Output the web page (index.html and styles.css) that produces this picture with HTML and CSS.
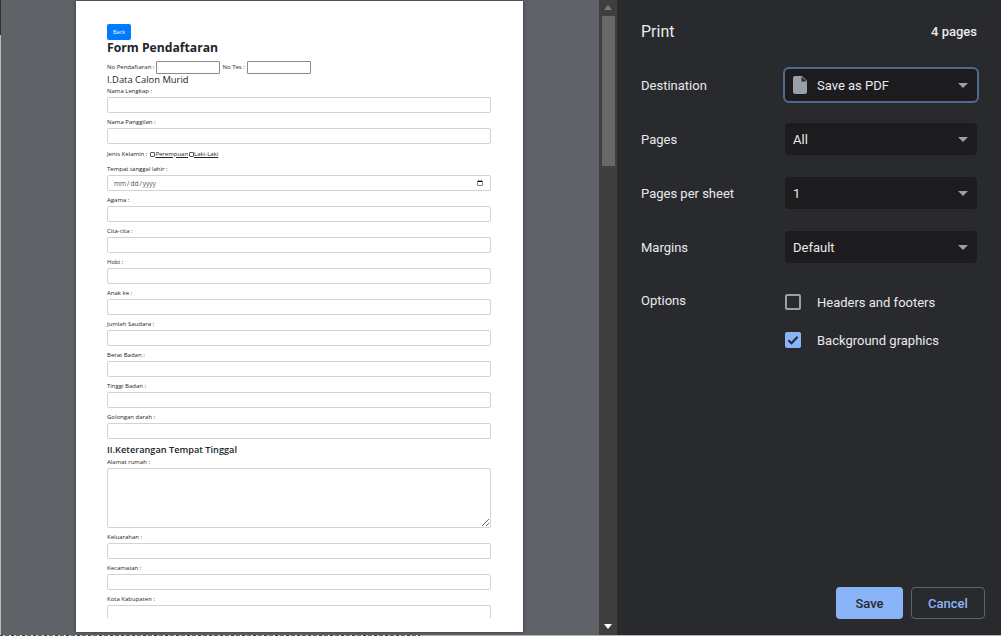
FILE: index.html
```html
<!DOCTYPE html>
<html lang="id">
<head>
    <meta charset="UTF-8">
    <meta name="viewport" content="width=device-width, initial-scale=1.0">
    <title>Print</title>
    <link rel="stylesheet" href="styles.css">
</head>
<body>
    <div class="app">
        <div class="edge"></div>

        <!-- Preview halaman -->
        <div class="preview">
            <div class="sheet">
                <div class="sheet-inner">
                    <button class="back" type="button">Back</button>
                    <h1>Form Pendaftaran</h1>
                    <div class="no-row">
                        <span>No Pendaftaran :</span>
                        <input class="no-input" type="text">
                        <span>No Tes :</span>
                        <input class="no-input" type="text">
                    </div>
                    <h2>I.Data Calon Murid</h2>

                    <div class="field"><label>Nama Lengkap :</label><input type="text"></div>
                    <div class="field"><label>Nama Panggilan :</label><input type="text"></div>
                    <div class="gender">
                        <span>Jenis Kelamin :</span>
                        <input type="checkbox"><u>Perempuan</u>
                        <input type="checkbox"><u>Laki-Laki</u>
                    </div>
                    <div class="field"><label>Tempat tanggal lahir :</label><input type="date"></div>
                    <div class="field"><label>Agama :</label><input type="text"></div>
                    <div class="field"><label>Cita-cita :</label><input type="text"></div>
                    <div class="field"><label>Hobi :</label><input type="text"></div>
                    <div class="field"><label>Anak ke :</label><input type="text"></div>
                    <div class="field"><label>Jumlah Saudara :</label><input type="text"></div>
                    <div class="field"><label>Berat Badan :</label><input type="text"></div>
                    <div class="field"><label>Tinggi Badan :</label><input type="text"></div>
                    <div class="field"><label>Golongan darah :</label><input type="text"></div>

                    <h2 class="second">II.Keterangan Tempat Tinggal</h2>
                    <div class="field"><label>Alamat rumah :</label><textarea></textarea></div>
                    <div class="field"><label>Keluarahan :</label><input type="text"></div>
                    <div class="field"><label>Kecamatan :</label><input type="text"></div>
                    <div class="field"><label>Kota Kabupaten :</label><input type="text"></div>
                </div>
            </div>
        </div>

        <!-- Scrollbar -->
        <div class="scrollbar">
            <div class="arrow-up"></div>
            <div class="thumb"></div>
            <div class="arrow-down"></div>
        </div>

        <!-- Panel pengaturan -->
        <aside class="panel">
            <div class="panel-head">
                <span class="title">Print</span>
                <span class="count">4 pages</span>
            </div>

            <div class="setting first">
                <span class="name">Destination</span>
                <div class="select focused">
                    <svg class="doc" width="14" height="18" viewBox="0 0 14 18"><path d="M2 0h7l5 5v11a2 2 0 0 1-2 2H2a2 2 0 0 1-2-2V2a2 2 0 0 1 2-2z" fill="#9aa0a6"/><path d="M8.5 0.5v5h5z" fill="#292a2d"/></svg>
                    <span>Save as PDF</span>
                    <i class="caret"></i>
                </div>
            </div>
            <div class="setting">
                <span class="name">Pages</span>
                <div class="select"><span>All</span><i class="caret"></i></div>
            </div>
            <div class="setting">
                <span class="name">Pages per sheet</span>
                <div class="select"><span>1</span><i class="caret"></i></div>
            </div>
            <div class="setting">
                <span class="name">Margins</span>
                <div class="select"><span>Default</span><i class="caret"></i></div>
            </div>

            <div class="options">
                <span class="name">Options</span>
                <div class="option-list">
                    <div class="option"><span class="box"></span><span>Headers and footers</span></div>
                    <div class="option">
                        <span class="box checked">
                            <svg width="16" height="16" viewBox="0 0 16 16"><path d="M3.4 8.2l3.1 3.1 6.1-6.6" fill="none" stroke="#292a2d" stroke-width="2"/></svg>
                        </span>
                        <span>Background graphics</span>
                    </div>
                </div>
            </div>

            <div class="actions">
                <button class="btn save" type="button">Save</button>
                <button class="btn cancel" type="button">Cancel</button>
            </div>
        </aside>
    </div>
    <div class="strip"></div>
</body>
</html>
```

FILE: styles.css
```css
html, body {
    margin: 0;
    padding: 0;
    height: 636px;
    overflow: hidden;
    background-color: #b4b4b4;
}

.app {
    display: flex;
    height: 635px;
}

.edge {
    width: 1px;
    background: linear-gradient(#333 0 35px, #b9b9b9 35px);
}

/* Preview */
.preview {
    width: 598px;
    padding-top: 1px;
    background-color: #5f6368;
    box-sizing: border-box;
}

.sheet {
    width: 447px;
    height: 631px;
    margin-left: 75px;
    background-color: #fff;
    box-shadow: 0 0 3px rgba(32, 33, 36, 0.7);
}

.sheet-inner {
    height: 617px;
    padding-left: 31px;
    padding-top: 23px;
    box-sizing: border-box;
    overflow: hidden;
    font-family: "Open Sans", sans-serif;
    font-size: 6px;
    line-height: 9px;
    color: #212529;
}

.sheet-inner > * {
    width: 384px;
}

.back {
    display: block;
    width: 24px;
    height: 16px;
    padding: 0;
    border: 0;
    border-radius: 2px;
    background-color: #007bff;
    color: #fff;
    font-family: inherit;
    font-size: 5.5px;
}

h1 {
    margin: 0 0 5px;
    font-size: 12.2px;
    line-height: 16px;
    font-weight: 700;
}

h2 {
    margin: 0 0 1px;
    font-size: 9.4px;
    line-height: 12px;
    font-weight: 500;
}

h2.second {
    margin-top: 1px;
    margin-bottom: 2px;
    font-weight: 600;
    font-size: 9.2px;
}

.no-row {
    display: flex;
    align-items: center;
    gap: 2px;
    height: 13px;
}

.no-row .no-input {
    width: 64px;
    height: 13px;
    padding: 0;
    border: 1px solid #8a8a8a;
    border-radius: 1px;
    box-sizing: border-box;
}

.field {
    margin-bottom: 5px;
}

.field label {
    display: block;
    height: 10px;
}

.field input,
.field textarea {
    display: block;
    width: 384px;
    height: 16px;
    padding: 0 5px;
    margin: 0;
    border: 1px solid #ced4da;
    border-radius: 2px;
    box-sizing: border-box;
    background-color: #fff;
    font-family: inherit;
    font-size: 6.5px;
    color: #495057;
}

.field textarea {
    height: 60px;
}

.gender {
    display: flex;
    align-items: center;
    height: 10px;
    margin-top: 1px;
    margin-bottom: 6px;
}

.gender span {
    margin-right: 2px;
}

.gender input {
    appearance: none;
    width: 5px;
    height: 5px;
    margin: 0 0 0 1px;
    border: 1px solid #555;
    border-radius: 1px;
    box-sizing: border-box;
}

/* Scrollbar */
.scrollbar {
    display: flex;
    flex-direction: column;
    align-items: center;
    width: 18px;
    padding-top: 5px;
    box-sizing: border-box;
    background-color: #3f3f3f;
}

.arrow-up {
    width: 0;
    height: 0;
    border-left: 4px solid transparent;
    border-right: 4px solid transparent;
    border-bottom: 5px solid #7b7b7b;
}

.thumb {
    width: 13px;
    height: 150px;
    margin-top: 6px;
    background-color: #686868;
}

.arrow-down {
    width: 0;
    height: 0;
    margin-top: auto;
    margin-bottom: 6px;
    border-left: 4px solid transparent;
    border-right: 4px solid transparent;
    border-top: 5px solid #fff;
}

/* Panel */
.panel {
    display: flex;
    flex-direction: column;
    width: 384px;
    padding: 0 16px 16px 24px;
    box-sizing: border-box;
    background-color: #292a2d;
    font-family: Roboto, sans-serif;
    font-size: 13px;
    color: #e8eaed;
}

.panel-head {
    display: flex;
    justify-content: space-between;
    align-items: center;
    height: 62px;
    padding-right: 8px;
}

.title {
    font-size: 16px;
}

.count {
    font-weight: 500;
}

.setting {
    display: flex;
    align-items: center;
    height: 32px;
    margin-bottom: 22px;
}

.setting.first {
    margin-top: 7px;
}

.name {
    width: 144px;
    flex: none;
}

.select {
    display: flex;
    align-items: center;
    width: 192px;
    height: 32px;
    padding: 0 8px;
    border-radius: 4px;
    box-sizing: border-box;
    background-color: #1c1c1e;
    font-size: 13px;
}

.select.focused {
    box-shadow: 0 0 0 2px #4f6a8f;
}

.doc {
    margin-right: 10px;
}

.caret {
    width: 0;
    height: 0;
    margin-left: auto;
    margin-right: 1px;
    border-left: 5px solid transparent;
    border-right: 5px solid transparent;
    border-top: 5px solid #9aa0a6;
}

.options {
    display: flex;
    margin-top: 8px;
}

.option-list {
    display: flex;
    flex-direction: column;
    gap: 22px;
    padding-top: 1px;
}

.option {
    display: flex;
    align-items: center;
    height: 16px;
}

.box {
    width: 16px;
    height: 16px;
    margin-right: 16px;
    border: 2px solid #9aa0a6;
    border-radius: 2px;
    box-sizing: border-box;
}

.box.checked {
    border: 0;
    background-color: #8ab4f8;
}

.actions {
    display: flex;
    justify-content: flex-end;
    gap: 8px;
    margin-top: auto;
}

.btn {
    height: 32px;
    border-radius: 4px;
    box-sizing: border-box;
    font-family: Roboto, sans-serif;
    font-size: 13px;
    font-weight: 500;
}

.save {
    width: 67px;
    border: 0;
    background-color: #8ab4f8;
    color: #292a2d;
}

.cancel {
    width: 74px;
    border: 1px solid #5f6368;
    background-color: transparent;
    color: #8ab4f8;
}

/* Garis bawah */
.strip {
    height: 1px;
    background: repeating-linear-gradient(90deg, #444 0 3px, #c8c8c8 3px 5px, #666 5px 9px, #e0e0e0 9px 11px) 0 0 / 420px 1px no-repeat;
}
```
